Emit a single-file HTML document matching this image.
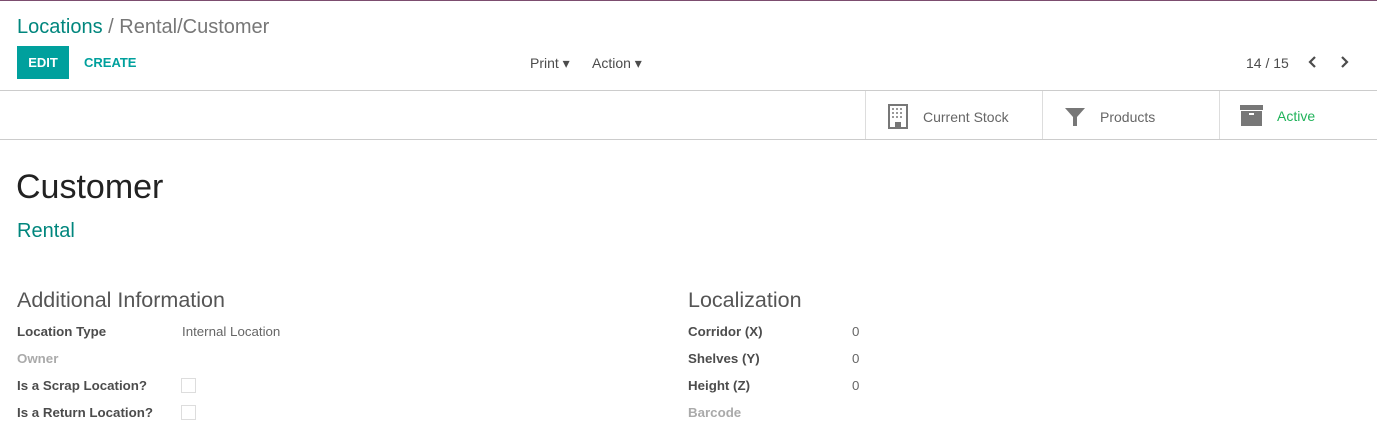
<!DOCTYPE html>
<html><head><style>
body{margin:0;width:1377px;height:437px;overflow:hidden;background:#fff;font-family:"Liberation Sans",sans-serif;color:#4c4c4c;position:relative}
.a{position:absolute;white-space:nowrap}
.lbl{font-size:13.3px;font-weight:bold;color:#4c4c4c}
.val{font-size:13.3px;color:#666}
.cb{position:absolute;width:13px;height:13px;border:1px solid #ddd;background:#fff}
</style></head><body>
<div class="a" style="left:0;top:0;width:1377px;height:1px;background:#7c4d6f"></div>
<div class="a" style="left:17px;top:16px;font-size:20px;color:#00867d">Locations <span style="color:#777">/ Rental/Customer</span></div>
<div class="a" style="left:17px;top:46px;width:52px;height:33px;background:#00a09d;color:#fff;font-size:13px;font-weight:bold;line-height:33px;text-align:center">EDIT</div>
<div class="a" style="left:84px;top:55px;font-size:13px;font-weight:bold;color:#00a09d">CREATE</div>
<div class="a" style="left:530px;top:55px;font-size:14px;color:#4c4c4c">Print ▾</div>
<div class="a" style="left:592px;top:55px;font-size:14px;color:#4c4c4c">Action ▾</div>
<div class="a" style="left:1246px;top:55px;font-size:14px;color:#4c4c4c">14 / 15</div>
<svg class="a" style="left:1307px;top:55px" width="50" height="14"><path d="M8 2L3 7L8 12M35 2L40 7L35 12" stroke="#4c4c4c" stroke-width="2.2" fill="none"/></svg>
<div class="a" style="left:0;top:90px;width:1377px;height:1px;background:#ccc"></div>
<div class="a" style="left:0;top:139px;width:1377px;height:1px;background:#ccc"></div>
<div class="a" style="left:865px;top:91px;width:1px;height:48px;background:#ddd"></div>
<div class="a" style="left:1042px;top:91px;width:1px;height:48px;background:#ddd"></div>
<div class="a" style="left:1219px;top:91px;width:1px;height:48px;background:#ddd"></div>
<svg class="a" style="left:888px;top:104px" width="20" height="25"><rect x="1" y="1" width="18" height="23" fill="#fff" stroke="#777" stroke-width="2"/><g fill="#999"><rect x="4" y="4" width="2" height="2"/><rect x="8" y="4" width="2" height="2"/><rect x="12" y="4" width="2" height="2"/><rect x="4" y="8" width="2" height="2"/><rect x="8" y="8" width="2" height="2"/><rect x="12" y="8" width="2" height="2"/><rect x="4" y="12" width="2" height="2"/><rect x="8" y="12" width="2" height="2"/><rect x="12" y="12" width="2" height="2"/></g><rect x="7" y="18" width="6" height="6" fill="#777"/></svg>
<div class="a" style="left:923px;top:109px;font-size:14px;color:#666">Current Stock</div>
<svg class="a" style="left:1065px;top:107px" width="20" height="20"><path d="M0 1H20L12 10V19H8V10Z" fill="#777"/></svg>
<div class="a" style="left:1100px;top:109px;font-size:14px;color:#666">Products</div>
<svg class="a" style="left:1240px;top:105px" width="24" height="22"><rect x="0" y="0" width="23" height="5" fill="#777"/><rect x="1" y="6" width="21" height="15" fill="#777"/><rect x="9" y="8" width="5" height="2" fill="#fff"/></svg>
<div class="a" style="left:1277px;top:108px;font-size:14px;color:#21b35b">Active</div>
<div class="a" style="left:16px;top:168px;font-size:34px;color:#222">Customer</div>
<div class="a" style="left:17px;top:220px;font-size:20px;color:#00867d">Rental</div>
<div class="a" style="left:17px;top:288px;font-size:21.5px;color:#555">Additional Information</div>
<div class="a lbl" style="left:17px;top:324px">Location Type</div>
<div class="a val" style="left:182px;top:324px">Internal Location</div>
<div class="a lbl" style="left:17px;top:351px;color:#aaa">Owner</div>
<div class="a lbl" style="left:17px;top:378px">Is a Scrap Location?</div>
<div class="cb" style="left:181px;top:378px"></div>
<div class="a lbl" style="left:17px;top:405px">Is a Return Location?</div>
<div class="cb" style="left:181px;top:405px"></div>
<div class="a" style="left:688px;top:288px;font-size:21.5px;color:#555">Localization</div>
<div class="a lbl" style="left:688px;top:324px">Corridor (X)</div>
<div class="a val" style="left:852px;top:324px">0</div>
<div class="a lbl" style="left:688px;top:351px">Shelves (Y)</div>
<div class="a val" style="left:852px;top:351px">0</div>
<div class="a lbl" style="left:688px;top:378px">Height (Z)</div>
<div class="a val" style="left:852px;top:378px">0</div>
<div class="a lbl" style="left:688px;top:405px;color:#aaa">Barcode</div>
</body></html>
